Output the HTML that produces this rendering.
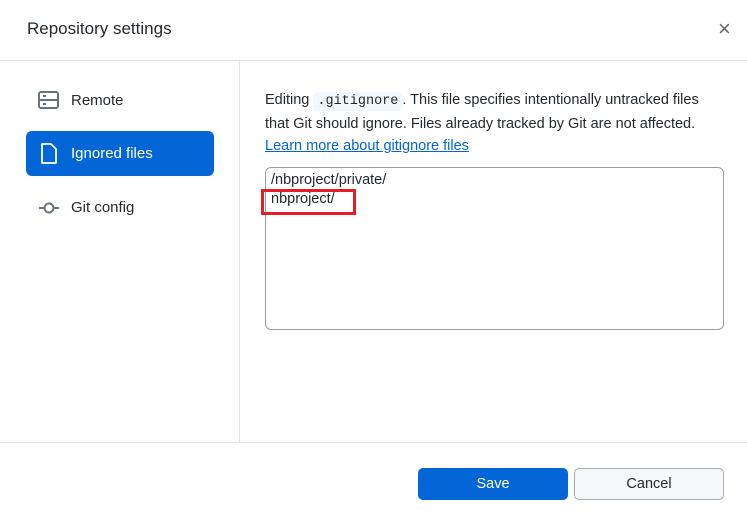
<!DOCTYPE html>
<html><head><style>
body{margin:0;width:747px;height:525px;background:#fff;font-family:"Liberation Sans",sans-serif;color:#24292e;position:relative;overflow:hidden}
.a{position:absolute}
</style></head><body>
<div class="a" style="left:27px;top:19px;font-size:17px;color:#24292e">Repository settings</div>
<div class="a" style="left:718px;top:16px;font-size:22px;color:#666">×</div>
<div class="a" style="left:0;top:60px;width:747px;height:1px;background:#e1e4e8"></div>
<div class="a" style="left:239px;top:61px;width:1px;height:381px;background:#e1e4e8"></div>
<div class="a" style="left:0;top:442px;width:747px;height:1px;background:#e1e4e8"></div>

<svg class="a" style="left:38px;top:91px" width="22" height="18" viewBox="0 0 22 18"><rect x="1" y="1" width="19" height="16" rx="2" fill="none" stroke="#6a737d" stroke-width="2"/><line x1="2" y1="9" x2="20" y2="9" stroke="#6a737d" stroke-width="2"/><rect x="5" y="4" width="3" height="2" fill="#6a737d"/><rect x="5" y="12" width="3" height="2" fill="#6a737d"/></svg>
<div class="a" style="left:71px;top:92px;font-size:15px">Remote</div>

<div class="a" style="left:26px;top:131px;width:188px;height:45px;background:#0366d6;border-radius:6px"></div>
<svg class="a" style="left:40px;top:143px" width="18" height="22" viewBox="0 0 18 22"><path d="M2 1h9l5 5v14H2z" fill="none" stroke="#fff" stroke-width="1.8" stroke-linejoin="round"/></svg>
<div class="a" style="left:71px;top:145px;font-size:15px;color:#fff">Ignored files</div>

<svg class="a" style="left:38px;top:199px" width="22" height="18" viewBox="0 0 22 18"><line x1="1" y1="9" x2="6" y2="9" stroke="#6a737d" stroke-width="2"/><line x1="16" y1="9" x2="21" y2="9" stroke="#6a737d" stroke-width="2"/><circle cx="11" cy="9" r="4.5" fill="none" stroke="#6a737d" stroke-width="2"/></svg>
<div class="a" style="left:71px;top:199px;font-size:15px">Git config</div>

<div class="a" style="left:265px;top:89px;font-size:14.5px;line-height:22px;width:455px">Editing <span style="font-family:'Liberation Mono',monospace;font-size:13.5px;background:#f1f8ff;padding:2px 4px;border-radius:4px">.gitignore</span>. This file specifies intentionally untracked files that Git should ignore. Files already tracked by Git are not affected.<br><span style="color:#0366d6;text-decoration:underline">Learn more about gitignore files</span></div>

<div class="a" style="left:265px;top:167px;width:457px;height:161px;border:1px solid #959da5;border-radius:6px"></div>
<div class="a" style="left:271px;top:171px;font-size:14.5px;line-height:19px">/nbproject/private/<br>nbproject/</div>
<div class="a" style="left:261px;top:189px;width:89px;height:20px;border:3px solid #e81c24"></div>

<div class="a" style="left:418px;top:468px;width:150px;height:32px;background:#0366d6;border-radius:5px;color:#fff;font-size:14.5px;text-align:center;line-height:33px">Save</div>
<div class="a" style="left:574px;top:468px;width:148px;height:30px;background:#f6f8fa;border:1px solid #a5acb3;border-radius:5px;font-size:14.5px;text-align:center;line-height:31px">Cancel</div>
</body></html>
